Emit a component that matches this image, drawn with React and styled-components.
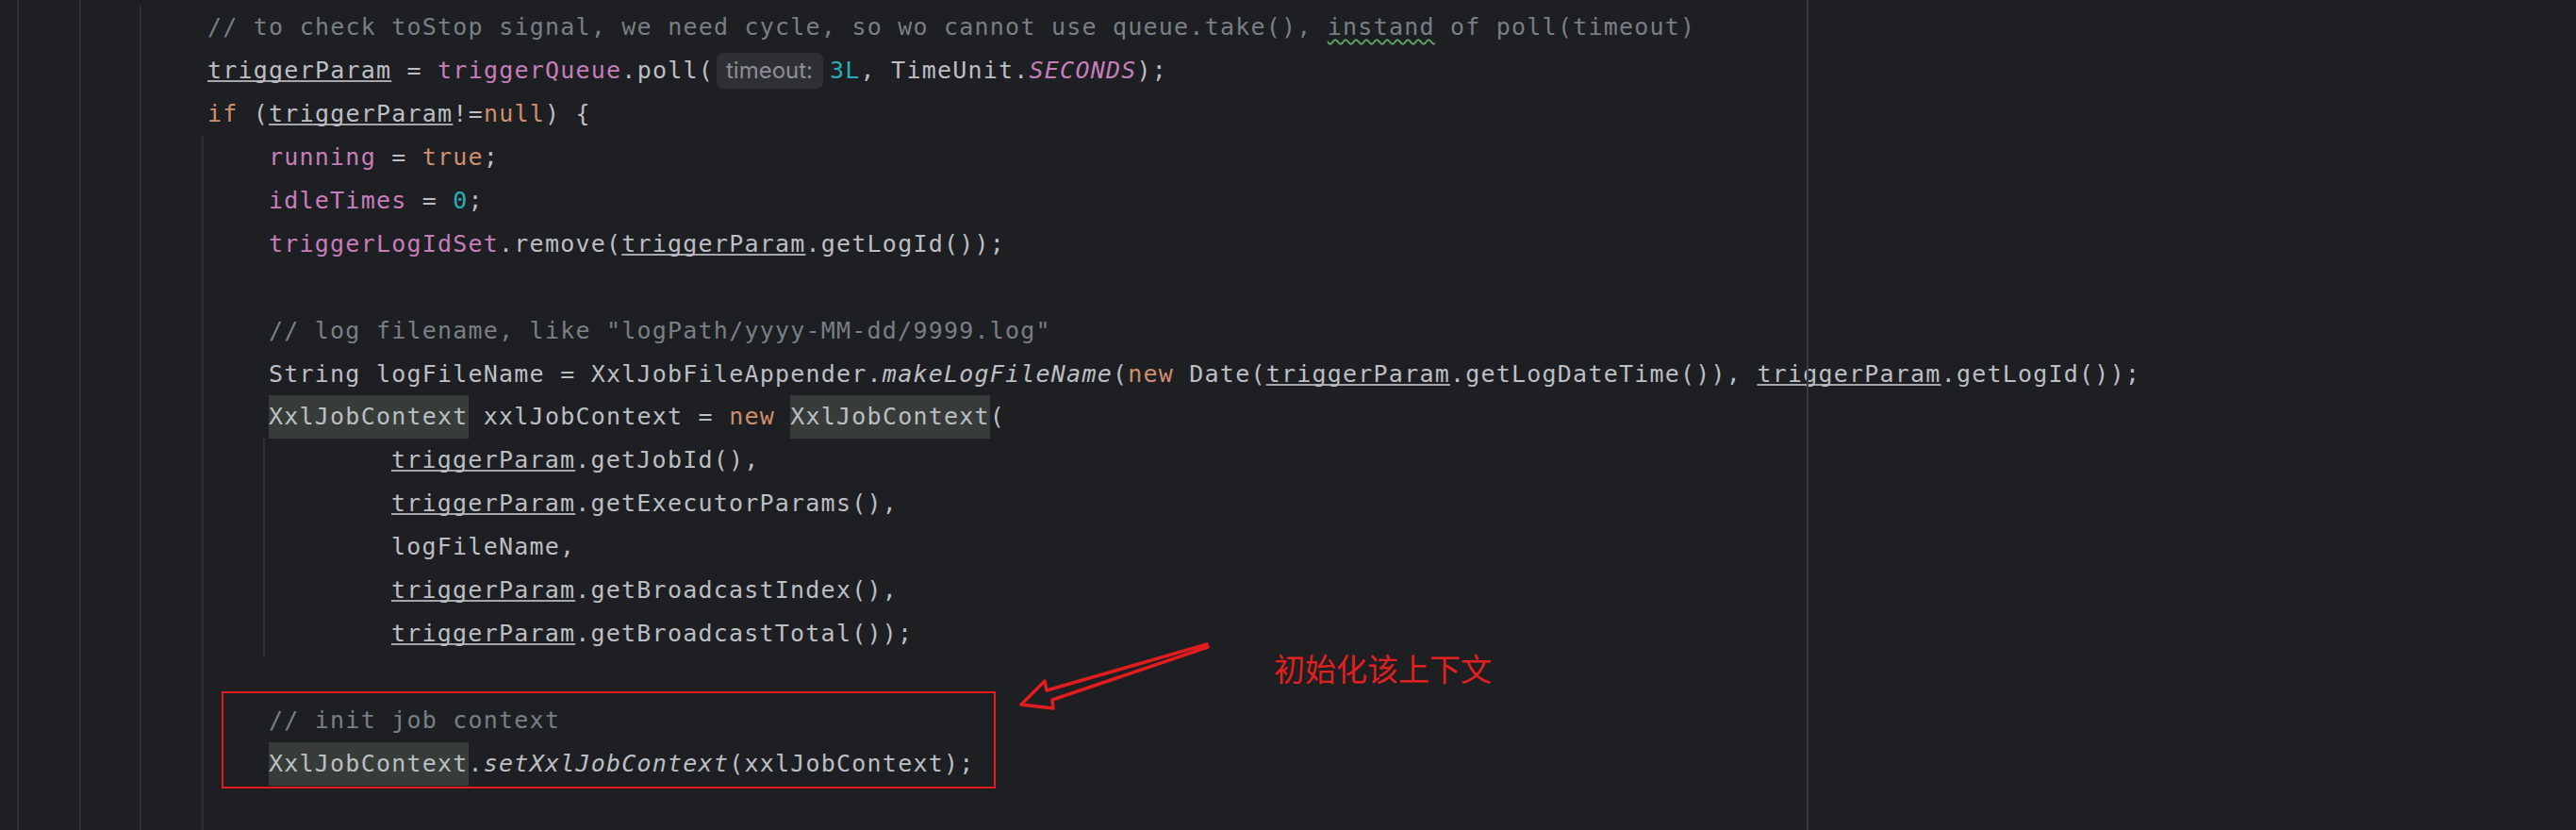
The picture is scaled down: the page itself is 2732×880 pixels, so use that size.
import React from "react";
import styled, { createGlobalStyle, css } from "styled-components";

const LH = 45.94;
const CW = 16.27;

const GlobalStyle = createGlobalStyle`
  html, body {
    margin: 0;
    padding: 0;
    background: #1e1f22;
  }
`;

const Editor = styled.div`
  position: relative;
  display: flex;
  width: 2732px;
  height: 880px;
  padding-left: 18px;
  box-sizing: border-box;
  overflow: hidden;
  background: #1e1f22;
  font-family: "DejaVu Sans Mono", "Liberation Mono", monospace;
  font-size: 25px;
  letter-spacing: 1.22px;
  color: #bcbec4;
`;

// an indentation scope: its left border is the IDE's indent guide
const Scope = styled.div`
  display: flex;
  flex-direction: ${(p) => (p.$column ? "column" : "row")};
  flex: ${(p) => (p.$fixed ? "none" : "1")};
  margin-top: ${(p) => p.$top || 0}px;
  margin-left: ${(p) => p.$shift || 0}px;
  padding-left: ${(p) => p.$pad}px;
  border-left: 2px solid #2d2f33;
`;

const Line = styled.div`
  flex: none;
  height: ${LH}px;
  line-height: ${LH}px;
  white-space: pre;
  padding-left: ${(p) => (p.$indent || 0) * CW + (p.$nudge || 0)}px;
`;

const Marked = styled.div`
  position: relative;
  display: flex;
  flex-direction: column;

  &::after {
    content: "";
    position: absolute;
    left: -50px;
    top: -8px;
    width: 817px;
    height: 99px;
    border: 2px solid #e21d1f;
  }
`;

const colors = {
  plain: "#bcbec4",
  comment: "#7a7e85",
  kw: "#cf8e6d",
  field: "#c77dbb",
  num: "#2aacb8",
};

const Tok = styled.span`
  color: ${(p) => colors[p.$kind] || colors.plain};
  ${(p) =>
    p.$italic &&
    css`
      font-style: italic;
    `}
`;

const Local = styled.span`
  text-decoration: underline;
  text-decoration-color: #a4a6ab;
  text-decoration-thickness: 2px;
  text-underline-offset: 2px;
  text-decoration-skip-ink: none;
`;

const Typo = styled.span`
  color: ${colors.comment};
  text-decoration: underline wavy #5fa55f;
  text-decoration-thickness: 1.5px;
  text-underline-offset: 4px;
  text-decoration-skip-ink: none;
`;

const Usage = styled.span`
  display: inline-block;
  height: ${LH}px;
  background: #373b39;
`;

const Inlay = styled.span`
  display: inline-block;
  height: 38px;
  line-height: 38px;
  margin: 0 7px 0 3px;
  padding: 0 11px 0 10px;
  border-radius: 7px;
  background: #2f3034;
  color: #8c8f95;
  font-family: Inter, "Noto Sans", sans-serif;
  font-size: 24px;
  letter-spacing: 0;
`;

const RightMargin = styled.div`
  position: absolute;
  left: 1916px;
  top: 0;
  bottom: 0;
  width: 2px;
  background: #393b40;
`;

const Annotation = styled.div`
  position: absolute;
  left: 1075px;
  top: 675px;
  display: flex;
  align-items: flex-start;
  gap: 61px;
`;

const Note = styled.div`
  margin-top: 17px;
  font-family: "Noto Sans CJK SC", sans-serif;
  font-size: 33px;
  line-height: 1;
  letter-spacing: 0;
  color: #e2201f;
`;

const T = (text, kind = "plain", italic = false) => ({ text, kind, italic });
const L = (text) => ({ text, local: true });
const H = (text) => ({ text, usage: true });
const I = (text) => ({ text, inlay: true });
const W = (text) => ({ text, typo: true });

const TP = L("triggerParam");

// rows inside the while-body scope, before the if block
const outer = [
  [
    T("// to check toStop signal, we need cycle, so wo cannot use queue.take(), ", "comment"),
    W("instand"),
    T(" of poll(timeout)", "comment"),
  ],
  [
    TP,
    T(" = "),
    T("triggerQueue", "field"),
    T(".poll("),
    I("timeout:"),
    T("3L", "num"),
    T(", TimeUnit."),
    T("SECONDS", "field", true),
    T(");"),
  ],
  [T("if", "kw"), T(" ("), TP, T("!="), T("null", "kw"), T(") {")],
];

const ifBody = [
  [T("running", "field"), T(" = "), T("true", "kw"), T(";")],
  [T("idleTimes", "field"), T(" = "), T("0", "num"), T(";")],
  [T("triggerLogIdSet", "field"), T(".remove("), TP, T(".getLogId());")],
  [],
  [T('// log filename, like "logPath/yyyy-MM-dd/9999.log"', "comment")],
  [
    T("String logFileName = XxlJobFileAppender."),
    T("makeLogFileName", "plain", true),
    T("("),
    T("new", "kw"),
    T(" Date("),
    TP,
    T(".getLogDateTime()), "),
    TP,
    T(".getLogId());"),
  ],
  [
    H("XxlJobContext"),
    T(" xxlJobContext = "),
    T("new", "kw"),
    T(" "),
    H("XxlJobContext"),
    T("("),
  ],
];

const args = [
  [TP, T(".getJobId(),")],
  [TP, T(".getExecutorParams(),")],
  [T("logFileName,")],
  [TP, T(".getBroadcastIndex(),")],
  [TP, T(".getBroadcastTotal());")],
];

const marked = [
  [T("// init job context", "comment")],
  [H("XxlJobContext"), T("."), T("setXxlJobContext", "plain", true), T("(xxlJobContext);")],
];

function Token({ t }) {
  if (t.local) return <Local>{t.text}</Local>;
  if (t.usage) return <Usage>{t.text}</Usage>;
  if (t.inlay) return <Inlay>{t.text}</Inlay>;
  if (t.typo) return <Typo>{t.text}</Typo>;
  return (
    <Tok $kind={t.kind} $italic={t.italic}>
      {t.text}
    </Tok>
  );
}

function Rows({ rows, nudge }) {
  return rows.map((toks, i) => (
    <Line key={i} $nudge={nudge}>
      {toks.map((t, j) => (
        <Token key={j} t={t} />
      ))}
    </Line>
  ));
}

function Arrow() {
  return (
    <svg width="215" height="90" viewBox="0 0 215 90">
      <path
        d="M205 8 L35 57 L33 47 L8 72 L42 76 L41 67 L206 11"
        fill="none"
        stroke="#e21d1f"
        strokeWidth="3.5"
        strokeLinejoin="round"
        strokeLinecap="round"
      />
    </svg>
  );
}

export default function App() {
  return (
    <>
      <GlobalStyle />
      <Editor>
        <Scope $pad={64}>
          <Scope $pad={62}>
            <Scope $column $top={6} $pad={64}>
              <Rows rows={outer} nudge={6} />
              <Scope $column $pad={69}>
                <Rows rows={ifBody} />
                <Scope $column $fixed $shift={-6} $pad={134}>
                  <Rows rows={args} />
                </Scope>
                <Line />
                <Marked>
                  <Rows rows={marked} />
                </Marked>
              </Scope>
            </Scope>
          </Scope>
        </Scope>
        <RightMargin />
        <Annotation>
          <Arrow />
          <Note>初始化该上下文</Note>
        </Annotation>
      </Editor>
    </>
  );
}
